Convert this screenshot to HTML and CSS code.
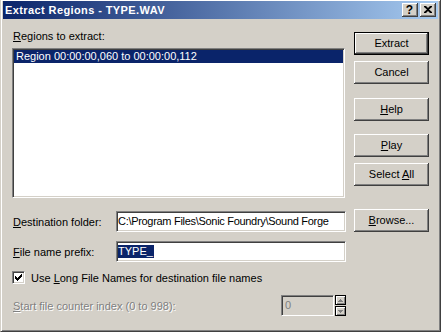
FILE: index.html
```html
<!DOCTYPE html>
<html>
<head>
<meta charset="utf-8">
<link rel="stylesheet" href="styles.css">
</head>
<body>
<div class="window">
  <div class="titlebar">
    <span class="title">Extract Regions - TYPE.WAV</span>
    <div class="tbtns">
      <div class="tbtn">?</div>
      <div class="tbtn">
        <svg width="8" height="7" viewBox="0 0 8 7"><path d="M0 0h2l2 2 2-2h2v1L5 3.5 8 6v1H6L4 5 2 7H0V6l3-2.5L0 1z" fill="#000"/></svg>
      </div>
    </div>
  </div>
  <div class="content">
    <div class="left-top">
      <div class="label"><u>R</u>egions to extract:</div>
      <div class="listbox">
        <div class="sel">Region 00:00:00,060 to 00:00:00,112</div>
      </div>
    </div>
    <div class="btnstack">
      <div class="btn default"><span>Extract</span></div>
      <div class="btn b-cancel"><span>Cancel</span></div>
      <div class="btn b-help"><span><u>H</u>elp</span></div>
      <div class="btn b-play"><span><u>P</u>lay</span></div>
      <div class="btn b-sel"><span>Select <u>A</u>ll</span></div>
    </div>
    <div class="row r-dest">
      <div class="flabel"><u>D</u>estination folder:</div>
      <div class="textbox path">C:\Program Files\Sonic Foundry\Sound Forge</div>
    </div>
    <div class="btn b-browse"><span><u>B</u>rowse...</span></div>
    <div class="row r-prefix">
      <div class="flabel"><u>F</u>ile name prefix:</div>
      <div class="textbox"><span class="hl">TYPE_</span></div>
    </div>
    <div class="row r-check">
      <div class="checkbox">
        <svg width="7" height="7" viewBox="0 0 7 7"><path d="M0 2h1v1h1v1h1V3h1V2h1V1h1V0h1v3H6v1H5v1H4v1H3v1H2V6H1V5H0z" fill="#000"/></svg>
      </div>
      <span class="clabel">Use <u>L</u>ong File Names for destination file names</span>
    </div>
    <div class="row r-counter">
      <div class="dlabel"><u>S</u>tart file counter index (0 to 998):</div>
      <div class="spinbox">0</div>
      <div class="spin">
        <div class="sbtn"><svg width="5" height="3" viewBox="0 0 5 3"><path d="M2 0h1v1h1v1h1v1H0V2h1V1h1z" fill="#808080"/></svg></div>
        <div class="sbtn"><svg width="5" height="3" viewBox="0 0 5 3"><path d="M0 0h5v1H4v1H3v1H2V2H1V1H0z" fill="#808080"/></svg></div>
      </div>
    </div>
  </div>
</div>
</body>
</html>
```

FILE: styles.css
```css
html, body {
  margin: 0;
  padding: 0;
  background: #d4d0c8;
}
body {
  font-family: "Liberation Sans", Arial, sans-serif;
  font-size: 11px;
  color: #000;
}
.window {
  box-sizing: border-box;
  width: 441px;
  height: 332px;
  background: #d4d0c8;
  border-left: 1px solid #d4d0c8;
  border-top: 0;
  border-right: 1px solid #404040;
  border-bottom: 1px solid #404040;
  box-shadow: inset 1px 1px #fff, inset -1px -1px #808080;
  padding: 1px 2px 0 1px;
}
.titlebar {
  height: 18px;
  background: linear-gradient(to right, #0a246a, #a6caf0);
  display: flex;
  align-items: center;
  justify-content: space-between;
  padding: 0 2px 0 2px;
  margin-left: 1px;
}
.title {
  color: #fff;
  font-weight: bold;
  font-size: 11px;
  letter-spacing: 0.4px;
}
.tbtns {
  display: flex;
  gap: 2px;
}
.tbtn {
  box-sizing: border-box;
  width: 16px;
  height: 14px;
  background: #d4d0c8;
  box-shadow: inset -1px -1px #404040, inset 1px 1px #fff, inset -2px -2px #808080;
  display: flex;
  align-items: center;
  justify-content: center;
  font-weight: bold;
  font-size: 12px;
  line-height: 14px;
  padding: 0 1px 1px 0;
}
.content {
  display: grid;
  grid-template-columns: 334px 75px;
  column-gap: 8px;
  padding: 11px 0 0 10px;
  align-items: start;
}
.label {
  height: 13px;
  line-height: 13px;
  margin: 0 0 5px 1px;
}
.listbox {
  box-sizing: border-box;
  width: 333px;
  height: 150px;
  background: #fff;
  border-top: 1px solid #808080;
  border-left: 1px solid #808080;
  border-right: 1px solid #fff;
  border-bottom: 1px solid #fff;
  box-shadow: inset 1px 1px #404040, inset -1px -1px #d4d0c8;
  padding: 1px;
}
.sel {
  background: #0a246a;
  color: #fff;
  height: 13px;
  line-height: 13px;
  padding-left: 2px;
}
.btnstack {
  display: flex;
  flex-direction: column;
  padding-top: 2px;
}
.btn {
  box-sizing: border-box;
  width: 75px;
  height: 23px;
  background: #d4d0c8;
  box-shadow: inset -1px -1px #404040, inset 1px 1px #fff, inset -2px -2px #808080;
  display: flex;
  align-items: center;
  justify-content: center;
  line-height: 13px;
}
.btn.default {
  border: 1px solid #000;
}
.b-cancel { margin-top: 6px; }
.b-help { margin-top: 14px; }
.b-play { margin-top: 13px; }
.b-sel { margin-top: 6px; }
.b-browse { margin-top: 11px; }
.row {
  grid-column: 1 / 2;
  display: flex;
  align-items: center;
}
.r-dest { margin-top: 13px; }
.r-prefix { margin-top: 9px; grid-column: 1 / 3; }
.r-check { margin-top: 9px; grid-column: 1 / 3; }
.r-counter { margin-top: 11px; grid-column: 1 / 3; }
.flabel {
  width: 103px;
  padding-left: 1px;
  flex: none;
}
.textbox {
  box-sizing: border-box;
  width: 230px;
  height: 21px;
  background: #fff;
  border-top: 1px solid #808080;
  border-left: 1px solid #808080;
  border-right: 1px solid #fff;
  border-bottom: 1px solid #fff;
  box-shadow: inset 1px 1px #404040, inset -1px -1px #d4d0c8;
  padding: 3px 0 0 1px;
  line-height: 13px;
  white-space: nowrap;
  overflow: hidden;
}
.path {
  letter-spacing: -0.3px;
}
.hl {
  background: #0a246a;
  color: #fff;
  display: inline-block;
  padding-right: 1px;
}
.checkbox {
  box-sizing: border-box;
  width: 13px;
  height: 13px;
  background: #fff;
  border-top: 1px solid #808080;
  border-left: 1px solid #808080;
  border-right: 1px solid #fff;
  border-bottom: 1px solid #fff;
  box-shadow: inset 1px 1px #404040, inset -1px -1px #d4d0c8;
  display: flex;
  align-items: center;
  justify-content: center;
  flex: none;
}
.clabel {
  margin-left: 6px;
}
.dlabel {
  width: 268px;
  padding-left: 1px;
  color: #808080;
  text-shadow: 1px 1px #fff;
  flex: none;
}
.spinbox {
  box-sizing: border-box;
  width: 53px;
  height: 21px;
  background: #d4d0c8;
  border-top: 1px solid #808080;
  border-left: 1px solid #808080;
  border-right: 1px solid #fff;
  border-bottom: 1px solid #fff;
  box-shadow: inset 1px 1px #404040, inset -1px -1px #d4d0c8;
  color: #808080;
  padding: 3px 0 0 3px;
  line-height: 13px;
}
.spin {
  margin-left: 1px;
  display: flex;
  flex-direction: column;
  gap: 1px;
  height: 21px;
}
.sbtn {
  box-sizing: border-box;
  width: 11px;
  height: 10px;
  background: #d4d0c8;
  border: 1px solid #000;
  box-shadow: inset 1px 1px #fff, inset -1px -1px #808080;
  display: flex;
  align-items: center;
  justify-content: center;
}
```
